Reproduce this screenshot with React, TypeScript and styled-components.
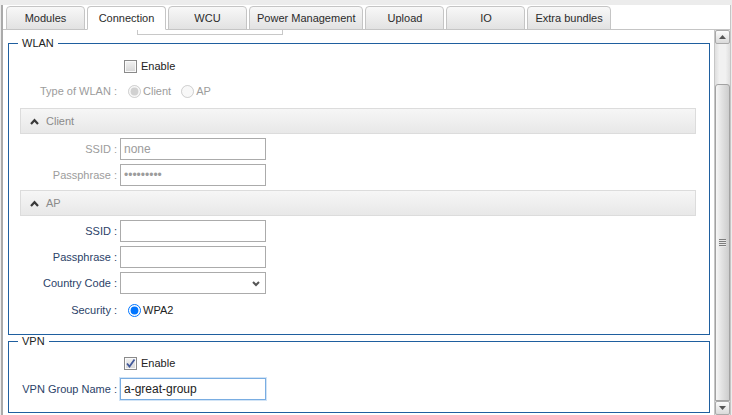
import React from "react"
import styled, { createGlobalStyle } from "styled-components"

const TABS = ["Modules", "Connection", "WCU", "Power Management", "Upload", "IO", "Extra bundles"]

const GlobalStyle = createGlobalStyle`
  html, body {
    margin: 0;
    padding: 0;
    height: 100%;
    overflow: hidden;
    background: #ececec;
  }
  body {
    font-family: "Liberation Sans", Arial, sans-serif;
    font-size: 11px;
    color: #222;
  }
`

const Wrapper = styled.div`
  margin: 5px 1px 0 1px;
  height: 410px;
  background: #fff;
  border-left: 2px solid #aaa;
  border-right: 1px solid #c5c5c5;
  display: flex;
  flex-direction: column;
  overflow: hidden;
`

const TabBar = styled.ul`
  list-style: none;
  margin: 0;
  padding: 1px 0 0 3px;
  display: flex;
  gap: 2px;
  border-bottom: 1px solid #c5c5c5;
  flex: none;
`

const Tab = styled.li<{ $active?: boolean }>`
  box-sizing: border-box;
  height: 24px;
  min-width: 79px;
  padding: 0 7px;
  margin-bottom: -1px;
  display: flex;
  align-items: center;
  justify-content: center;
  border: 1px solid #c5c5c5;
  border-bottom-color: ${(p) => (p.$active ? "#fff" : "#c5c5c5")};
  border-radius: 4px 4px 0 0;
  background: ${(p) => (p.$active ? "#fff" : "linear-gradient(#f8f8f8, #e2e2e2)")};
  color: #2b2b2b;
  white-space: nowrap;
`

const Body = styled.div`
  flex: 1;
  min-height: 0;
  display: flex;
`

const Content = styled.div`
  flex: 1;
  min-width: 0;
  overflow: hidden;
`

// bottom edge of a field scrolled out of view above the WLAN group
const ClippedBox = styled.div`
  margin-left: 134px;
  width: 146px;
  height: 5px;
  box-sizing: border-box;
  border: 1px solid #c8c8c8;
  border-top: none;
`

const Group = styled.fieldset<{ $top: number }>`
  margin: ${(p) => p.$top}px 4px 0 5px;
  padding: 0;
  min-width: 0;
  border: 1px solid #1f5f9f;
`

const GroupTitle = styled.legend`
  margin-left: 9px;
  padding: 0 4px;
  font-size: 11px;
  line-height: 14px;
  color: #222;
`

const GroupBody = styled.div<{ $top: number; $bottom: number }>`
  display: flex;
  flex-direction: column;
  gap: 4px;
  padding: ${(p) => p.$top}px 0 ${(p) => p.$bottom}px;
`

const Row = styled.div<{ $shift?: number }>`
  display: flex;
  align-items: center;
  height: 22px;
  margin-top: ${(p) => p.$shift ?? 0}px;
`

const Label = styled.label<{ $muted?: boolean }>`
  width: 108px;
  flex: none;
  margin-right: 3px;
  text-align: right;
  white-space: nowrap;
  color: ${(p) => (p.$muted ? "#9c9c9c" : "#2b4268")};
`

const CheckBox = styled.span`
  box-sizing: border-box;
  width: 13px;
  height: 13px;
  margin-left: 4px;
  border: 1px solid #8a8a8a;
  background: linear-gradient(#f2f2f2, #d6d6d6);
  box-shadow: inset 0 0 0 1px #fafafa;
  display: flex;
  align-items: center;
  justify-content: center;
`

const CheckText = styled.span`
  margin-left: 4px;
  color: #222;
`

const Radio = styled.input`
  width: 13px;
  height: 13px;
  margin: 0 2px 0 8px;
`

const RadioText = styled.span<{ $muted?: boolean }>`
  margin-right: 2px;
  color: ${(p) => (p.$muted ? "#9c9c9c" : "#222")};
`

const TextField = styled.input<{ $focused?: boolean }>`
  box-sizing: border-box;
  width: 146px;
  height: 22px;
  margin: 0;
  padding: 0 3px;
  border: 1px solid ${(p) => (p.$focused ? "#79ade2" : "#ababab")};
  box-shadow: ${(p) => (p.$focused ? "0 0 0 1px #d2e4f6" : "none")};
  outline: none;
  background: #fff;
  font-family: "Liberation Sans", Arial, sans-serif;
  font-size: 12px;
  color: #222;
  &:disabled {
    color: #9c9c9c;
    background: #fff;
  }
`

const SelectBox = styled.div`
  position: relative;
  width: 146px;
  height: 22px;
`

const Select = styled.select`
  appearance: none;
  box-sizing: border-box;
  width: 100%;
  height: 100%;
  margin: 0;
  border: 1px solid #ababab;
  border-radius: 0;
  background: #fff;
  font-family: "Liberation Sans", Arial, sans-serif;
  font-size: 12px;
`

const SelectArrow = styled.svg`
  position: absolute;
  right: 6px;
  top: 9px;
  pointer-events: none;
`

const SectionHeader = styled.div<{ $shift?: number }>`
  box-sizing: border-box;
  height: 26px;
  margin: ${(p) => p.$shift ?? 0}px 13px 0 11px;
  padding-left: 9px;
  display: flex;
  align-items: center;
  border: 1px solid #dcdcdc;
  background: linear-gradient(#f6f6f6, #e8e8e8);
  color: #8a8a8a;
  & svg {
    margin-right: 7px;
  }
`

const ScrollBar = styled.div`
  width: 15px;
  flex: none;
  display: flex;
  flex-direction: column;
  border-left: 1px solid #c6c6c6;
  background: linear-gradient(to right, #dedede, #f1f1f1 30%, #f1f1f1 70%, #dedede);
`

const ScrollButton = styled.div`
  box-sizing: border-box;
  height: 14px;
  flex: none;
  display: flex;
  align-items: center;
  justify-content: center;
  border: 1px solid #a9a9a9;
  border-radius: 2px;
  background: linear-gradient(#fbfbfb, #dadada);
`

const ScrollThumb = styled.div`
  flex: 1;
  margin: 40px 0 0;
  box-sizing: border-box;
  border: 1px solid #a2a2a2;
  border-radius: 3px 3px 0 0;
  background: linear-gradient(to right, #f7f7f7, #e4e4e4 40%, #cdcdcd);
  display: flex;
  align-items: center;
  justify-content: center;
`

const Grip = styled.div`
  width: 7px;
  height: 8px;
  background: repeating-linear-gradient(#7d7d7d 0 1px, #e8e8e8 1px 2px);
`

const Chevron = () => (
  <svg width="9" height="7" viewBox="0 0 9 7">
    <polyline points="1,6 4.5,2.2 8,6" fill="none" stroke="#3a3a3a" strokeWidth="2.2" />
  </svg>
)

const Check = ({ checked }: { checked?: boolean }) => (
  <CheckBox>
    {checked && (
      <svg width="11" height="11" viewBox="0 0 11 11">
        <path d="M2 5.5 L4.5 8.5 L9.5 1.5" fill="none" stroke="#41589a" strokeWidth="1.8" />
      </svg>
    )}
  </CheckBox>
)

export default function App() {
  return (
    <>
      <GlobalStyle />
      <Wrapper>
        <TabBar>
          {TABS.map((t, i) => (
            <Tab key={t} $active={i === 1}>
              {t}
            </Tab>
          ))}
        </TabBar>
        <Body>
          <Content>
            <ClippedBox />
            <Group $top={1}>
              <GroupTitle>WLAN</GroupTitle>
              <GroupBody $top={5} $bottom={13}>
                <Row>
                  <Label />
                  <Check />
                  <CheckText>Enable</CheckText>
                </Row>
                <Row $shift={-1}>
                  <Label $muted>Type of WLAN :</Label>
                  <Radio type="radio" name="wlan" defaultChecked disabled />
                  <RadioText $muted>Client</RadioText>
                  <Radio type="radio" name="wlan" disabled />
                  <RadioText $muted>AP</RadioText>
                </Row>
                <SectionHeader $shift={2}>
                  <Chevron />
                  Client
                </SectionHeader>
                <Row>
                  <Label $muted>SSID :</Label>
                  <TextField defaultValue="none" disabled />
                </Row>
                <Row>
                  <Label $muted>Passphrase :</Label>
                  <TextField type="password" defaultValue="secret123" disabled />
                </Row>
                <SectionHeader>
                  <Chevron />
                  AP
                </SectionHeader>
                <Row>
                  <Label>SSID :</Label>
                  <TextField />
                </Row>
                <Row>
                  <Label>Passphrase :</Label>
                  <TextField />
                </Row>
                <Row>
                  <Label>Country Code :</Label>
                  <SelectBox>
                    <Select defaultValue="">
                      <option value=""></option>
                    </Select>
                    <SelectArrow width="8" height="6" viewBox="0 0 8 6">
                      <polyline points="1,1 4,4 7,1" fill="none" stroke="#555" strokeWidth="2" />
                    </SelectArrow>
                  </SelectBox>
                </Row>
                <Row $shift={1}>
                  <Label>Security :</Label>
                  <Radio type="radio" name="sec" defaultChecked />
                  <RadioText>WPA2</RadioText>
                </Row>
              </GroupBody>
            </Group>
            <Group $top={-1}>
              <GroupTitle>VPN</GroupTitle>
              <GroupBody $top={4} $bottom={12}>
                <Row>
                  <Label />
                  <Check checked />
                  <CheckText>Enable</CheckText>
                </Row>
                <Row>
                  <Label>VPN Group Name :</Label>
                  <TextField $focused defaultValue="a-great-group" />
                </Row>
              </GroupBody>
            </Group>
          </Content>
          <ScrollBar>
            <ScrollButton>
              <svg width="7" height="4" viewBox="0 0 7 4">
                <polygon points="0,4 3.5,0 7,4" fill="#555" />
              </svg>
            </ScrollButton>
            <ScrollThumb>
              <Grip />
            </ScrollThumb>
            <ScrollButton>
              <svg width="7" height="4" viewBox="0 0 7 4">
                <polygon points="0,0 3.5,4 7,0" fill="#555" />
              </svg>
            </ScrollButton>
          </ScrollBar>
        </Body>
      </Wrapper>
    </>
  )
}
